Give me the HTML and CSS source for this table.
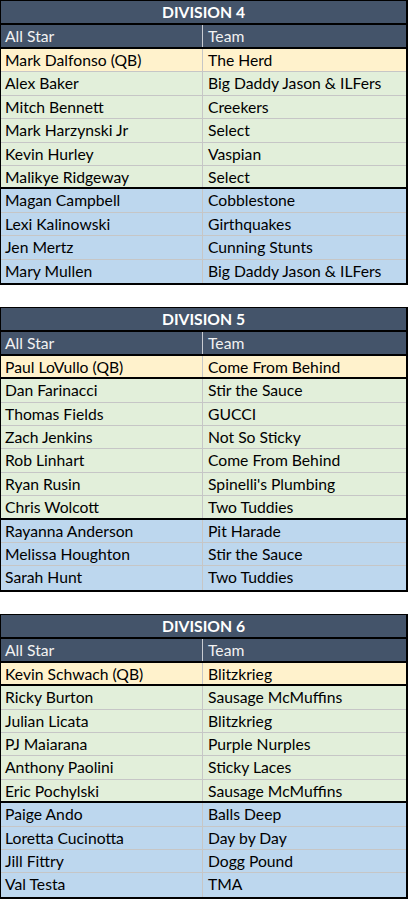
FILE: index.html
```html
<!DOCTYPE html>
<html>
<head>
<meta charset="utf-8">
<link rel="stylesheet" href="styles.css">
</head>
<body>
<div class="page">
  <section class="division">
    <div class="title">DIVISION 4</div>
    <div class="row head"><div class="c1">All Star</div><div class="c2">Team</div></div>
    <div class="row qb"><div class="c1">Mark Dalfonso (QB)</div><div class="c2">The Herd</div></div>
    <div class="row green"><div class="c1">Alex Baker</div><div class="c2">Big Daddy Jason &amp; ILFers</div></div>
    <div class="row green"><div class="c1">Mitch Bennett</div><div class="c2">Creekers</div></div>
    <div class="row green"><div class="c1">Mark Harzynski Jr</div><div class="c2">Select</div></div>
    <div class="row green"><div class="c1">Kevin Hurley</div><div class="c2">Vaspian</div></div>
    <div class="row green last"><div class="c1">Malikye Ridgeway</div><div class="c2">Select</div></div>
    <div class="row blue"><div class="c1">Magan Campbell</div><div class="c2">Cobblestone</div></div>
    <div class="row blue"><div class="c1">Lexi Kalinowski</div><div class="c2">Girthquakes</div></div>
    <div class="row blue"><div class="c1">Jen Mertz</div><div class="c2">Cunning Stunts</div></div>
    <div class="row blue end"><div class="c1">Mary Mullen</div><div class="c2">Big Daddy Jason &amp; ILFers</div></div>
  </section>
  <section class="division">
    <div class="title">DIVISION 5</div>
    <div class="row head"><div class="c1">All Star</div><div class="c2">Team</div></div>
    <div class="row qb last"><div class="c1">Paul LoVullo (QB)</div><div class="c2">Come From Behind</div></div>
    <div class="row green"><div class="c1">Dan Farinacci</div><div class="c2">Stir the Sauce</div></div>
    <div class="row green"><div class="c1">Thomas Fields</div><div class="c2">GUCCI</div></div>
    <div class="row green"><div class="c1">Zach Jenkins</div><div class="c2">Not So Sticky</div></div>
    <div class="row green"><div class="c1">Rob Linhart</div><div class="c2">Come From Behind</div></div>
    <div class="row green"><div class="c1">Ryan Rusin</div><div class="c2">Spinelli's Plumbing</div></div>
    <div class="row green last"><div class="c1">Chris Wolcott</div><div class="c2">Two Tuddies</div></div>
    <div class="row blue"><div class="c1">Rayanna Anderson</div><div class="c2">Pit Harade</div></div>
    <div class="row blue"><div class="c1">Melissa Houghton</div><div class="c2">Stir the Sauce</div></div>
    <div class="row blue end"><div class="c1">Sarah Hunt</div><div class="c2">Two Tuddies</div></div>
  </section>
  <section class="division">
    <div class="title">DIVISION 6</div>
    <div class="row head"><div class="c1">All Star</div><div class="c2">Team</div></div>
    <div class="row qb last"><div class="c1">Kevin Schwach (QB)</div><div class="c2">Blitzkrieg</div></div>
    <div class="row green"><div class="c1">Ricky Burton</div><div class="c2">Sausage McMuffins</div></div>
    <div class="row green"><div class="c1">Julian Licata</div><div class="c2">Blitzkrieg</div></div>
    <div class="row green"><div class="c1">PJ Maiarana</div><div class="c2">Purple Nurples</div></div>
    <div class="row green"><div class="c1">Anthony Paolini</div><div class="c2">Sticky Laces</div></div>
    <div class="row green last"><div class="c1">Eric Pochylski</div><div class="c2">Sausage McMuffins</div></div>
    <div class="row blue"><div class="c1">Paige Ando</div><div class="c2">Balls Deep</div></div>
    <div class="row blue"><div class="c1">Loretta Cucinotta</div><div class="c2">Day by Day</div></div>
    <div class="row blue"><div class="c1">Jill Fittry</div><div class="c2">Dogg Pound</div></div>
    <div class="row blue end"><div class="c1">Val Testa</div><div class="c2">TMA</div></div>
  </section>
</div>
</body>
</html>
```

FILE: styles.css
```css
html, body {
  margin: 0;
  padding: 0;
  background: #ffffff;
}
body {
  font-family: Lato, "Open Sans", sans-serif;
  font-size: 15.7px;
  color: #000;
  width: 408px;
}
.page {
  display: flex;
  flex-direction: column;
  gap: 22px;
}
.division {
  box-sizing: border-box;
  width: 408px;
  border-top: 1px solid #000;
  border-left: 1px solid #000;
  border-right: 2px solid #000;
  border-bottom: 2px solid #000;
  display: flex;
  flex-direction: column;
}
.title {
  box-sizing: border-box;
  height: 24px;
  background: #44546a;
  color: #fff;
  font-weight: 700;
  text-align: center;
  line-height: 23px;
  border-bottom: 2px solid #000;
}
.row {
  box-sizing: border-box;
  height: 23.4px;
  display: grid;
  grid-template-columns: 202px 1fr;
  border-bottom: 1px solid #c6c6c6;
}
.row > div {
  padding-left: 4px;
  line-height: 23px;
  white-space: nowrap;
  overflow: hidden;
}
.row .c1 {
  border-right: 1px solid #c6c6c6;
}
.row .c2 {
  padding-left: 5px;
}
.head {
  height: 24px;
  background: #44546a;
  color: #f2f2f2;
  border-bottom: 2px solid #000;
}
.head .c1 {
  border-right-color: #c9ccd2;
}
.qb { background: #fff2cc; }
.green { background: #e2efda; }
.blue { background: #bdd7ee; }
.last { border-bottom: 2px solid #000; }
.end { border-bottom: none; }
```
